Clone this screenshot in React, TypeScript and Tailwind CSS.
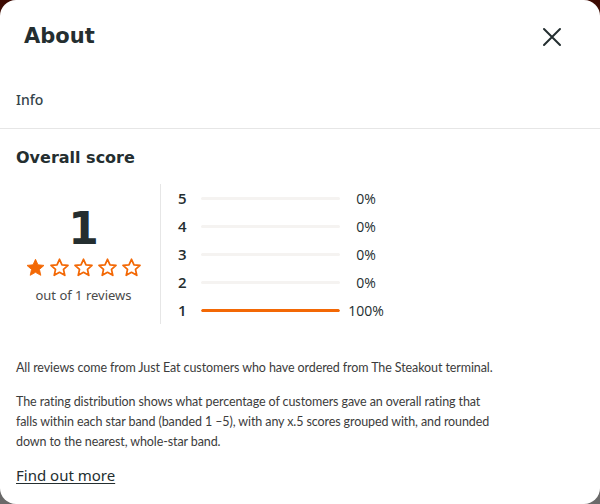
import React from "react";

const rows = [
  { star: 5, pct: 0 },
  { star: 4, pct: 0 },
  { star: 3, pct: 0 },
  { star: 2, pct: 0 },
  { star: 1, pct: 100 },
];

const heavy = { fontFamily: "'DejaVu Sans', sans-serif" };

function Star({ filled }: { filled: boolean }) {
  return (
    <svg width="21" height="21" viewBox="0 0 24 24">
      <path
        d="M12 2.6l2.85 6.3 6.85.7-5.15 4.6 1.5 6.75L12 17.5l-6.05 3.45 1.5-6.75L2.3 9.6l6.85-.7z"
        fill={filled ? "#f36805" : "none"}
        stroke="#f36805"
        strokeWidth={filled ? 1 : 2}
        strokeLinejoin="round"
      />
    </svg>
  );
}

export default function App() {
  return (
    <div className="w-[600px] h-[504px] bg-gradient-to-b from-[#3d0a02] to-[#6a6a6a]">
      <div className="w-full h-full bg-white rounded-[16px] overflow-hidden flex flex-col" style={{ fontFamily: "'Noto Sans', sans-serif" }}>
        {/* header */}
        <div className="flex items-center justify-between pl-6 pr-[38px] h-[74px] shrink-0">
          <h1 className="text-[21px] font-bold text-[#242e30]" style={heavy}>
            About
          </h1>
          <svg width="20" height="20" viewBox="0 0 20 20" stroke="#242e30" strokeWidth="2" strokeLinecap="round">
            <path d="M2 2l16 16M18 2L2 18" />
          </svg>
        </div>

        {/* tabs */}
        <div className="px-4 h-[55px] pb-[4px] flex items-center border-b border-[#e6e6e6] shrink-0">
          <span className="text-[14px] font-medium text-[#33434a]">Info</span>
        </div>

        <div className="px-4 pt-[17px]">
          <h2 className="text-[16px] font-bold text-[#242e30] leading-6" style={heavy}>
            Overall score
          </h2>

          <div className="flex mt-[14px]">
            <div className="w-[135px] flex flex-col items-center pt-[20px]">
              <div className="text-[44px] font-bold leading-[50px] text-[#242e30]" style={heavy}>
                1
              </div>
              <div className="flex gap-[3px] mt-[3px]">
                {[0, 1, 2, 3, 4].map((i) => (
                  <Star key={i} filled={i === 0} />
                ))}
              </div>
              <div className="text-[13px] text-[#4a4a4a] mt-[8px]">out of 1 reviews</div>
            </div>

            <div className="ml-[9px] border-l border-[#e6e6e6] pl-[17px]">
              {rows.map((r) => (
                <div key={r.star} className="h-7 flex items-center">
                  <span className="w-[23px] text-[15px] font-semibold text-[#242e30]" style={{ fontFamily: "'Open Sans', sans-serif" }}>
                    {r.star}
                  </span>
                  <div className="w-[139px] h-[3px] rounded-full bg-[#f5f3f1] overflow-hidden">
                    <div className="h-full bg-[#f36805] rounded-full" style={{ width: `${r.pct}%` }} />
                  </div>
                  <span className="w-[46px] text-center text-[14px] text-[#242e30] ml-[3px]" style={{ fontFamily: "'Open Sans', sans-serif" }}>
                    {r.pct}%
                  </span>
                </div>
              ))}
            </div>
          </div>

          <div className="w-[485px] text-[12.5px] leading-5 tracking-[-0.1px] text-[#3c3c3c]" style={{ fontFamily: "Lato, sans-serif" }}>
            <p className="mt-[34px] whitespace-nowrap">
              All reviews come from Just Eat customers who have ordered from The Steakout terminal.
            </p>
            <p className="mt-[14px]">
              The rating distribution shows what percentage of customers gave an overall rating that falls within each star band (banded 1 –5), with any x.5 scores grouped with, and rounded down to the nearest, whole-star band.
            </p>
          </div>
          <a className="inline-block mt-[12px] text-[15px] text-[#242e30] underline underline-offset-2">Find out more</a>
        </div>
      </div>
    </div>
  );
}
